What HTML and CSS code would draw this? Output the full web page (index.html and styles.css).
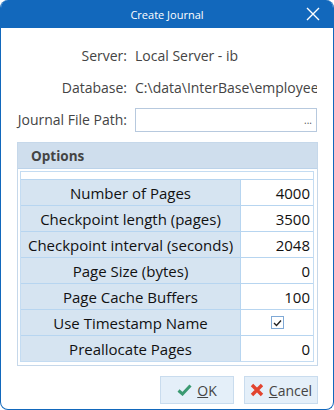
FILE: index.html
```html
<!DOCTYPE html>
<html lang="en">
<head>
    <meta charset="utf-8">
    <link rel="stylesheet" href="styles.css">
</head>
<body>
    <div class="window">
        <div class="titlebar">
            <span></span>
            <span class="title">Create Journal</span>
            <span class="close">
                <svg width="14" height="14" viewBox="0 0 14 14">
                    <path d="M1 1 L13 13 M13 1 L1 13" stroke="#fff" stroke-width="1.4" fill="none"/>
                </svg>
            </span>
        </div>

        <div class="content">
            <div class="form">
                <span class="form-label">Server:</span>
                <span class="form-value">Local Server - ib</span>

                <span class="form-label">Database:</span>
                <span class="form-value clip">C:\data\InterBase\employee.ib</span>

                <span class="form-label">Journal File Path:</span>
                <div class="path-input">
                    <span class="ellipsis">...</span>
                </div>
            </div>

            <div class="options">
                <div class="options-header">Options</div>
                <div class="options-body">
                    <div class="grid">
                        <div class="grid-label"><span>Number of Pages</span></div>
                        <div class="grid-value">4000</div>
                        <div class="grid-label"><span>Checkpoint length (pages)</span></div>
                        <div class="grid-value">3500</div>
                        <div class="grid-label"><span>Checkpoint interval (seconds)</span></div>
                        <div class="grid-value">2048</div>
                        <div class="grid-label"><span>Page Size (bytes)</span></div>
                        <div class="grid-value">0</div>
                        <div class="grid-label"><span>Page Cache Buffers</span></div>
                        <div class="grid-value">100</div>
                        <div class="grid-label"><span>Use Timestamp Name</span></div>
                        <div class="grid-value check-cell">
                            <span class="checkbox">
                                <svg width="9" height="8" viewBox="0 0 9 8">
                                    <path d="M1 4 L3.5 6.5 L8 1.5" stroke="#222" stroke-width="1.4" fill="none"/>
                                </svg>
                            </span>
                        </div>
                        <div class="grid-label"><span>Preallocate Pages</span></div>
                        <div class="grid-value">0</div>
                    </div>
                </div>
            </div>

            <div class="actions">
                <button class="button">
                    <svg class="button-icon" width="15" height="12" viewBox="0 0 15 12">
                        <path d="M1.5 6.5 L5.5 10 L13.5 1.5" stroke="#3b9a72" stroke-width="3" fill="none"/>
                    </svg>
                    <span><u>O</u>K</span>
                </button>
                <button class="button">
                    <svg class="button-icon" width="14" height="14" viewBox="0 0 14 14">
                        <path d="M2 2 L12 12 M12 2 L2 12" stroke="#e2442f" stroke-width="3.4" fill="none"/>
                    </svg>
                    <span><u>C</u>ancel</span>
                </button>
            </div>
        </div>
    </div>
</body>
</html>
```

FILE: styles.css
```css
body {
    margin: 0;
    background-color: #ffffff;
    font-family: "Open Sans", "Noto Sans", sans-serif;
}

.window {
    width: 334px;
    height: 410px;
    box-sizing: border-box;
    border: 1px solid #1268bc;
    border-top: none;
    border-radius: 8px;
    overflow: hidden;
    display: flex;
    flex-direction: column;
    background-color: #ffffff;
}

.titlebar {
    height: 28px;
    flex-shrink: 0;
    background-color: #1268bc;
    color: white;
    display: grid;
    grid-template-columns: 1fr auto 1fr;
    align-items: center;
    margin: 0 -1px;
}

.title {
    font-size: 11px;
    padding-top: 1px;
}

.close {
    justify-self: end;
    margin-right: 14px;
    display: flex;
}

.content {
    flex: 1;
    padding: 11px 15px 0 16px;
    display: flex;
    flex-direction: column;
}

.form {
    display: grid;
    grid-template-columns: 110px 1fr;
    grid-auto-rows: 32px;
    column-gap: 8px;
    margin-right: 1px;
}

.form-label,
.form-value {
    display: flex;
    align-items: center;
    font-size: 14px;
    color: #444;
    white-space: nowrap;
}

.form-label {
    justify-content: flex-end;
}

.form-value.clip {
    overflow: hidden;
}

.path-input {
    align-self: center;
    height: 24px;
    box-sizing: border-box;
    border: 1px solid #b7c9de;
    display: flex;
    justify-content: flex-end;
    align-items: center;
    padding-right: 4px;
    margin-top: 1px;
}

.ellipsis {
    font-size: 10px;
    color: #555;
    line-height: 10px;
}

.options {
    margin-top: 7px;
    border: 1px solid #c6d8ea;
    display: flex;
    flex-direction: column;
    height: 224px;
    box-sizing: border-box;
}

.options-header {
    height: 27px;
    background-color: #cfdeed;
    border-bottom: 1px solid #bcd3ea;
    display: flex;
    align-items: center;
    padding-left: 13px;
    font-size: 13.5px;
    font-weight: 700;
    color: #444;
}

.options-body {
    flex: 1;
    padding: 2px 3px 3px 2px;
}

.grid {
    border: 1px solid #c4dcf2;
    padding-top: 7px;
    display: grid;
    grid-template-columns: 220px 1fr;
    grid-auto-rows: 26px;
}

.grid-label {
    background-color: #d6e4f1;
    border-top: 1px solid #b7d5f0;
    border-right: 1px solid #b7d5f0;
    display: flex;
    justify-content: center;
    align-items: center;
    overflow: hidden;
    white-space: nowrap;
    font-size: 15px;
    color: #111;
}

.grid-label span {
    flex-shrink: 0;
}

.grid-value {
    border-top: 1px solid #b7d5f0;
    display: flex;
    justify-content: flex-end;
    align-items: center;
    padding-right: 3px;
    font-size: 15px;
    color: #111;
}

.check-cell {
    justify-content: flex-start;
    padding-left: 30px;
}

.checkbox {
    width: 11px;
    height: 11px;
    border: 1px solid #7fa9d6;
    display: flex;
    justify-content: center;
    align-items: center;
    background-color: #fff;
}

.actions {
    display: flex;
    justify-content: flex-end;
    gap: 10px;
    margin-top: 10px;
}

.button {
    width: 74px;
    height: 28px;
    box-sizing: border-box;
    background-color: #e4eff9;
    border: 1px solid #c9dcee;
    display: flex;
    justify-content: center;
    align-items: center;
    gap: 5px;
    font-family: "Open Sans", "Noto Sans", sans-serif;
    font-size: 14px;
    color: #444;
    padding: 0;
}

.button-icon {
    flex-shrink: 0;
}
```
